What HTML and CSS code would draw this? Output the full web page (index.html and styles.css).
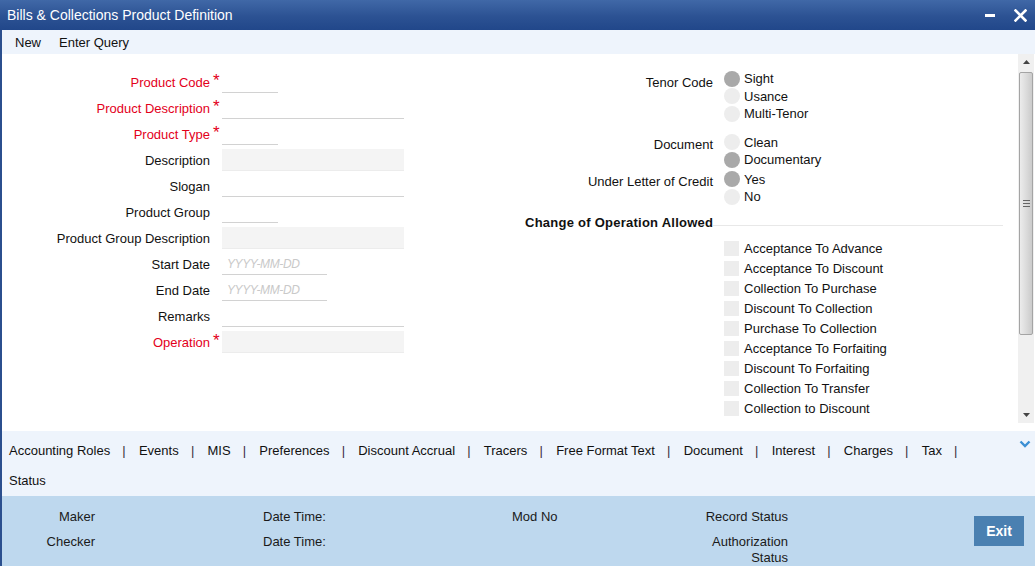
FILE: index.html
```html
<!DOCTYPE html>
<html>
<head>
<meta charset="utf-8">
<link rel="stylesheet" href="styles.css">
</head>
<body>
<div class="window">
  <div class="titlebar">
    <span class="title">Bills &amp; Collections Product Definition</span>
    <div class="winbtns">
      <span class="minbtn"></span>
      <svg class="closebtn" width="13" height="13" viewBox="0 0 13 13"><path d="M1.5 1.5 L11.5 11.5 M11.5 1.5 L1.5 11.5" stroke="#fff" stroke-width="2.6" stroke-linecap="square"/></svg>
    </div>
  </div>
  <div class="frame">
    <div class="menubar">
      <span class="menuitem">New</span>
      <span class="menuitem">Enter Query</span>
    </div>
    <div class="content">
      <div class="main">
        <div class="left">
          <label class="lbl req">Product Code</label><span class="star">*</span><span class="inp short"></span>
          <label class="lbl req">Product Description</label><span class="star">*</span><span class="inp long"></span>
          <label class="lbl req">Product Type</label><span class="star">*</span><span class="inp short"></span>
          <label class="lbl">Description</label><span class="star"></span><span class="inp long filled"></span>
          <label class="lbl">Slogan</label><span class="star"></span><span class="inp long"></span>
          <label class="lbl">Product Group</label><span class="star"></span><span class="inp short"></span>
          <label class="lbl">Product Group Description</label><span class="star"></span><span class="inp long filled"></span>
          <label class="lbl">Start Date</label><span class="star"></span><span class="inp date"><span class="ph">YYYY-MM-DD</span></span>
          <label class="lbl">End Date</label><span class="star"></span><span class="inp date"><span class="ph">YYYY-MM-DD</span></span>
          <label class="lbl">Remarks</label><span class="star"></span><span class="inp long"></span>
          <label class="lbl req">Operation</label><span class="star">*</span><span class="inp long filled"></span>
        </div>
        <div class="right">
          <div class="group g-tenor">
            <div class="glabel">Tenor Code</div>
            <div class="opts">
              <div class="opt"><span class="radio on"></span>Sight</div>
              <div class="opt"><span class="radio"></span>Usance</div>
              <div class="opt"><span class="radio"></span>Multi-Tenor</div>
            </div>
          </div>
          <div class="group g-doc">
            <div class="glabel">Document</div>
            <div class="opts">
              <div class="opt"><span class="radio"></span>Clean</div>
              <div class="opt"><span class="radio on"></span>Documentary</div>
            </div>
          </div>
          <div class="group g-ulc">
            <div class="glabel">Under Letter of Credit</div>
            <div class="opts">
              <div class="opt"><span class="radio on"></span>Yes</div>
              <div class="opt"><span class="radio"></span>No</div>
            </div>
          </div>
          <div class="sechead"><span class="sectitle">Change of Operation Allowed</span><span class="secline"></span></div>
          <div class="checks">
            <div class="chk"><span class="box"></span>Acceptance To Advance</div>
            <div class="chk"><span class="box"></span>Acceptance To Discount</div>
            <div class="chk"><span class="box"></span>Collection To Purchase</div>
            <div class="chk"><span class="box"></span>Discount To Collection</div>
            <div class="chk"><span class="box"></span>Purchase To Collection</div>
            <div class="chk"><span class="box"></span>Acceptance To Forfaiting</div>
            <div class="chk"><span class="box"></span>Discount To Forfaiting</div>
            <div class="chk"><span class="box"></span>Collection To Transfer</div>
            <div class="chk"><span class="box"></span>Collection to Discount</div>
          </div>
        </div>
      </div>
      <div class="scrollbar">
        <div class="sb-btn"><svg width="7" height="4" viewBox="0 0 7 4"><path d="M0 4 L3.5 0 L7 4 Z" fill="#444"/></svg></div>
        <div class="sb-track">
          <div class="sb-thumb"><span class="grip"></span></div>
        </div>
        <div class="sb-btn"><svg width="7" height="4" viewBox="0 0 7 4"><path d="M0 0 L3.5 4 L7 0 Z" fill="#444"/></svg></div>
      </div>
    </div>
    <div class="tabs">
      <div class="tablist">
        <span class="tab">Accounting Roles<span class="sep">|</span></span>
        <span class="tab">Events<span class="sep">|</span></span>
        <span class="tab">MIS<span class="sep">|</span></span>
        <span class="tab">Preferences<span class="sep">|</span></span>
        <span class="tab">Discount Accrual<span class="sep">|</span></span>
        <span class="tab">Tracers<span class="sep">|</span></span>
        <span class="tab">Free Format Text<span class="sep">|</span></span>
        <span class="tab">Document<span class="sep">|</span></span>
        <span class="tab">Interest<span class="sep">|</span></span>
        <span class="tab">Charges<span class="sep">|</span></span>
        <span class="tab">Tax<span class="sep">|</span></span>
        <span class="tab">Status</span>
      </div>
      <svg class="chev" width="12" height="8" viewBox="0 0 12 8"><path d="M1.5 1.5 L6 6 L10.5 1.5" fill="none" stroke="#3b8fd4" stroke-width="2.4"/></svg>
    </div>
    <div class="footer">
      <div class="fcell f-r c1 r1">Maker</div>
      <div class="fcell f-r c1 r2">Checker</div>
      <div class="fcell c3 r1">Date Time:</div>
      <div class="fcell c3 r2">Date Time:</div>
      <div class="fcell c4 r1">Mod No</div>
      <div class="fcell f-r c5 r1">Record Status</div>
      <div class="fcell f-r c5 r2">Authorization Status</div>
      <button class="exit">Exit</button>
    </div>
  </div>
</div>
</body>
</html>
```

FILE: styles.css
```css
* { box-sizing: border-box; }
html, body { margin: 0; padding: 0; }
body {
  font-family: "Liberation Sans", Arial, sans-serif;
  font-size: 13px;
  color: #111;
  background: #fff;
}
.window {
  width: 1035px;
  height: 566px;
  overflow: hidden;
  display: flex;
  flex-direction: column;
}
.titlebar {
  height: 30px;
  flex: none;
  background: linear-gradient(to bottom, #4068a7 0%, #2c5293 55%, #21478a 100%);
  color: #fff;
  display: flex;
  align-items: center;
  padding-left: 7px;
  padding-right: 8px;
}
.title { font-size: 14px; flex: 1; }
.winbtns { display: flex; align-items: center; }
.minbtn {
  width: 10px;
  height: 3px;
  background: #fff;
  margin-right: 19px;
  margin-top: 1px;
}
.closebtn { display: block; }
.frame {
  flex: 1;
  border-left: 2px solid #2b4f8e;
  display: flex;
  flex-direction: column;
}
.menubar {
  height: 24px;
  flex: none;
  background: #eef4fc;
  display: flex;
  align-items: center;
  padding-left: 13px;
  gap: 18px;
}
.content {
  height: 377px;
  flex: none;
  display: flex;
  background: #fff;
}
.main { display: flex; width: 1016px; }
.left {
  width: 523px;
  flex: none;
  padding-top: 15px;
  display: grid;
  grid-template-columns: 208px 12px auto;
  grid-auto-rows: 26px;
  align-items: center;
  align-content: start;
}
.lbl { text-align: right; white-space: nowrap; }
.lbl.req { color: #e3001b; }
.star {
  color: #e3001b;
  font-size: 17px;
  line-height: 17px;
  padding-left: 3px;
  align-self: start;
  padding-top: 3px;
}
.inp {
  display: block;
  height: 22px;
  border-bottom: 1px solid #d2d2d2;
  position: relative;
}
.inp.short { width: 56px; }
.inp.long { width: 182px; }
.inp.date { width: 105px; }
.inp.filled { background: #f4f4f4; border-bottom-color: #ececec; }
.ph {
  display: block;
  color: #c9c9c9;
  font-style: italic;
  font-size: 12px;
  letter-spacing: -0.4px;
  line-height: 22px;
  padding-left: 5px;
}
.right {
  width: 480px;
  flex: none;
  padding-top: 16px;
}
.group { display: flex; }
.g-doc { margin-top: 11px; }
.g-ulc { margin-top: 2px; }
.glabel {
  width: 188px;
  text-align: right;
  padding-top: 2.5px;
  line-height: 17.5px;
  white-space: nowrap;
}
.g-tenor .glabel { padding-top: 3.5px; }
.opts { margin-left: 11px; }
.opt {
  height: 17.5px;
  display: flex;
  align-items: center;
  gap: 4px;
}
.radio {
  width: 16px;
  height: 16px;
  border-radius: 50%;
  background: #ededed;
  flex: none;
}
.radio.on { background: #a9a9a9; }
.sechead {
  margin-top: 8.5px;
  height: 18px;
  display: flex;
  align-items: flex-start;
}
.sectitle {
  font-weight: bold;
  letter-spacing: 0.25px;
  line-height: 18px;
  white-space: nowrap;
}
.secline {
  flex: 1;
  height: 12px;
  border-bottom: 1px solid #e8e8e8;
  margin-right: 2px;
}
.checks {
  margin-top: 6px;
  padding-left: 199px;
}
.chk {
  height: 20px;
  display: flex;
  align-items: center;
  gap: 5px;
}
.box {
  width: 15px;
  height: 15px;
  background: #ededed;
  flex: none;
}
.scrollbar {
  width: 16px;
  height: 369px;
  background: #f0f0f0;
  display: flex;
  flex-direction: column;
}
.sb-btn {
  height: 16px;
  flex: none;
  display: flex;
  align-items: center;
  justify-content: center;
}
.sb-track { flex: 1; padding-top: 2px; }
.sb-thumb {
  height: 263px;
  margin: 0 1px;
  border: 1px solid #a4a4a4;
  border-radius: 2px;
  background: linear-gradient(to right, #ececec 0%, #dcdcdc 50%, #cbcbcb 100%);
  display: flex;
  align-items: center;
  justify-content: center;
}
.grip {
  width: 7px;
  height: 7px;
  border-top: 1px solid #666;
  border-bottom: 1px solid #666;
  position: relative;
}
.grip::after {
  content: "";
  position: absolute;
  left: 0; right: 0; top: 2px;
  border-top: 1px solid #666;
}
.tabs {
  height: 65px;
  flex: none;
  background: #eef4fc;
  display: flex;
  padding-top: 5px;
  padding-left: 7px;
}
.tablist {
  width: 990px;
  display: flex;
  flex-wrap: wrap;
  align-content: flex-start;
}
.tab { line-height: 30px; white-space: nowrap; }
.sep { padding: 0 13.2px 0 12.2px; color: #3a2a3a; }
.chev { margin-left: auto; margin-top: 4px; margin-right: 4px; }
.footer {
  flex: 1;
  background: #bed8ee;
  display: grid;
  grid-template-columns: 93px 168px 249px 188px 88px 1fr;
  grid-template-rows: 16px auto;
  row-gap: 9px;
  padding-top: 13px;
  color: #1a1a1a;
}
.fcell { line-height: 16px; }
.f-r { text-align: right; }
.c1 { grid-column: 1; }
.c3 { grid-column: 3; }
.c4 { grid-column: 4; }
.c5 { grid-column: 5; }
.r1 { grid-row: 1; }
.r2 { grid-row: 2; }
.exit {
  grid-column: 6;
  grid-row: 1 / span 2;
  justify-self: end;
  align-self: start;
  margin-top: 7px;
  margin-right: 11px;
  width: 50px;
  height: 30px;
  border: none;
  background: #4a80b1;
  color: #fff;
  font-family: "Liberation Sans", Arial, sans-serif;
  font-weight: bold;
  font-size: 14px;
  padding: 0;
}
```
